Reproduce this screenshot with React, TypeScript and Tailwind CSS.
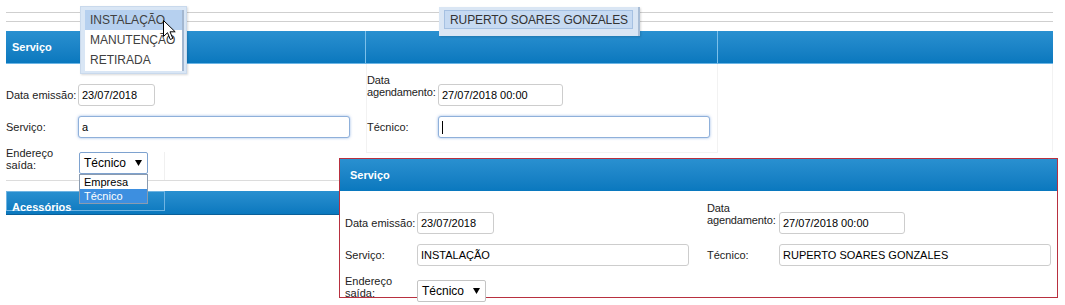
import React from "react";

const LABEL = "text-[11px] leading-[12px] text-[#222] whitespace-nowrap";

function Field({
  w,
  value,
  focused,
  caret,
}: {
  w: string;
  value?: string;
  focused?: boolean;
  caret?: boolean;
}) {
  return (
    <div
      className={`h-[22px] ${w} shrink-0 rounded-[3px] border bg-white flex items-center pl-[3px] text-[11px] text-black whitespace-nowrap ${
        focused
          ? "border-[#8fb0da] shadow-[0_0_3px_rgba(110,155,220,0.7)]"
          : "border-[#cdcdcd]"
      }`}
    >
      {value}
      {caret && <span className="w-px h-[13px] bg-black" />}
    </div>
  );
}

function Select({ blue }: { blue?: boolean }) {
  return (
    <div
      className={`h-[22px] w-[69px] rounded-[2px] border bg-white flex items-center justify-between pl-[4px] pr-[5px] text-[12px] text-black ${
        blue ? "border-[#7ea2cf]" : "border-[#c4c4c4]"
      }`}
    >
      <span>Técnico</span>
      <svg width="7" height="6" viewBox="0 0 7 6">
        <path d="M0 0H7L3.5 6Z" fill="#000" />
      </svg>
    </div>
  );
}

function Row({ children }: { children: React.ReactNode }) {
  return <div className="flex h-[22px] items-center">{children}</div>;
}

function Header({ title, className = "" }: { title?: string; className?: string }) {
  return (
    <div
      className={`bg-gradient-to-b from-[#2990d0] to-[#0978be] flex items-center text-white font-bold text-[11px] ${className}`}
    >
      {title}
    </div>
  );
}

export default function App() {
  return (
    <div className="relative w-[1065px] h-[305px] overflow-hidden bg-white font-['Liberation_Sans',Arial,sans-serif]">
      {/* Background page */}
      <div className="ml-[6px] w-[1047px] pt-[12px]">
        <div className="h-px bg-[#cfcfcf]" />
        <div className="h-px bg-[#cfcfcf] mt-[8px]" />
        <div className="mt-[9px] grid grid-cols-[360px_352px_1fr] border-b border-[#6cb5e5]">
          <Header title="Serviço" className="h-[32px] pl-[6px] border-r border-[#7cc0ea]" />
          <Header className="h-[32px] border-r border-[#7cc0ea]" />
          <Header className="h-[32px]" />
        </div>
        <div className="grid grid-cols-[360px_352px_1fr] items-start">
          <div className="pt-[20px]">
            <Row>
              <div className={`w-[72px] ${LABEL}`}>Data emissão:</div>
              <Field w="w-[77px]" value="23/07/2018" />
            </Row>
            <div className="mt-[10px]">
              <Row>
                <div className={`w-[72px] ${LABEL}`}>Serviço:</div>
                <Field w="w-[272px]" value="a" focused />
              </Row>
            </div>
            <div className="mt-[14px] w-[159px] border-r border-[#f0f0f0]">
              <Row>
                <div className={`w-[73px] -mt-[8px] ${LABEL}`}>
                  Endereço
                  <br />
                  saída:
                </div>
                <div className="relative">
                  <Select blue />
                  <div className="absolute left-0 top-[22px] w-[69px] h-[30px] border border-[#8a9bb0] bg-white text-[11px] leading-[14px]">
                    <div className="pl-[4px] text-black">Empresa</div>
                    <div className="pl-[4px] bg-[#3d8fe0] text-white">Técnico</div>
                  </div>
                </div>
              </Row>
              <div className="h-[6px]" />
            </div>
            <div className="h-px bg-[#dcdcdc]" />
          </div>
          <div className="pt-[20px] pb-[14px] border-l border-r border-b border-[#f2f2f2]">
            <Row>
              <div className={`w-[71px] -mt-[18px] tracking-[-0.15px] ${LABEL}`}>
                Data
                <br />
                agendamento:
              </div>
              <Field w="w-[125px]" value="27/07/2018 00:00" />
            </Row>
            <div className="mt-[10px]">
              <Row>
                <div className={`w-[71px] ${LABEL}`}>Técnico:</div>
                <Field w="w-[272px]" focused caret />
              </Row>
            </div>
          </div>
          <div className="h-[88px] border-r border-[#f2f2f2]" />
        </div>
        <div className="mt-[10px] h-[24px] bg-gradient-to-b from-[#2990d0] to-[#0978be] border-b border-[#0a5f98]">
          <div className="w-[159px] h-[20px] border border-[#6fb4e2] pl-[5px] pt-[9px] text-[11px] leading-[12px] font-bold text-white">
            Acessórios
          </div>
        </div>
      </div>

      {/* Autocomplete list (Serviço) */}
      <div className="absolute left-[80px] top-[6px] w-[107px] h-[68px] bg-[#d9e6f5] border border-[#c9d9ec] pl-[4px] pt-[3px] shadow-[1px_1px_2px_rgba(0,0,0,0.15)]">
        <div className="flex w-[99px] h-[61px] bg-white">
          <div className="flex-1 text-[12px] leading-[20px] text-[#404040] whitespace-nowrap overflow-hidden">
            <div className="pl-[5px] bg-[#b6d0ef]">INSTALAÇÃO</div>
            <div className="pl-[5px]">MANUTENÇÃO</div>
            <div className="pl-[5px]">RETIRADA</div>
          </div>
          <div className="w-[2px] bg-[#a3b7d0]" />
        </div>
      </div>

      {/* Mouse pointer */}
      <svg
        className="absolute left-[163px] top-[20px]"
        width="13"
        height="21"
        viewBox="0 0 13 21"
      >
        <path
          d="M0.5 0.5V16.5L4.5 12.7L7.3 19.5L9.8 18.4L7 11.8H12.2Z"
          fill="#fff"
          stroke="#000"
          strokeWidth="1"
          strokeLinejoin="round"
        />
      </svg>

      {/* Autocomplete (Técnico) */}
      <div className="absolute left-[439px] top-[7px] w-[201px] h-[29px] bg-[#dae6f4] border-r-2 border-[#a9bdd5] shadow-[1px_1px_2px_rgba(0,0,0,0.15)] pl-[5px] pt-[3px]">
        <div className="w-[189px] h-[19px] bg-[#c6daf2] border border-[#a6c1e2] flex items-center pl-[5px] text-[12px] text-[#333] whitespace-nowrap overflow-hidden tracking-[-0.1px]">
          RUPERTO SOARES GONZALES
        </div>
      </div>

      {/* Overlay panel */}
      <div className="absolute left-[339px] top-[158px] w-[719px] h-[140px] border border-[#b8303f] bg-white">
        <Header title="Serviço" className="h-[32px] pl-[10px]" />
        <div className="pl-[5px] pt-[21px] grid grid-cols-[362px_1fr]">
          <div>
            <Row>
              <div className={`w-[72px] ${LABEL}`}>Data emissão:</div>
              <Field w="w-[77px]" value="23/07/2018" />
            </Row>
            <div className="mt-[10px]">
              <Row>
                <div className={`w-[72px] ${LABEL}`}>Serviço:</div>
                <Field w="w-[272px]" value="INSTALAÇÃO" />
              </Row>
            </div>
            <div className="mt-[14px]">
              <Row>
                <div className={`w-[72px] -mt-[8px] ${LABEL}`}>
                  Endereço
                  <br />
                  saída:
                </div>
                <Select />
              </Row>
            </div>
          </div>
          <div>
            <Row>
              <div className={`w-[72px] -mt-[18px] tracking-[-0.15px] ${LABEL}`}>
                Data
                <br />
                agendamento:
              </div>
              <Field w="w-[126px]" value="27/07/2018 00:00" />
            </Row>
            <div className="mt-[10px]">
              <Row>
                <div className={`w-[72px] ${LABEL}`}>Técnico:</div>
                <Field w="w-[272px]" value="RUPERTO SOARES GONZALES" />
              </Row>
            </div>
          </div>
        </div>
      </div>
    </div>
  );
}
